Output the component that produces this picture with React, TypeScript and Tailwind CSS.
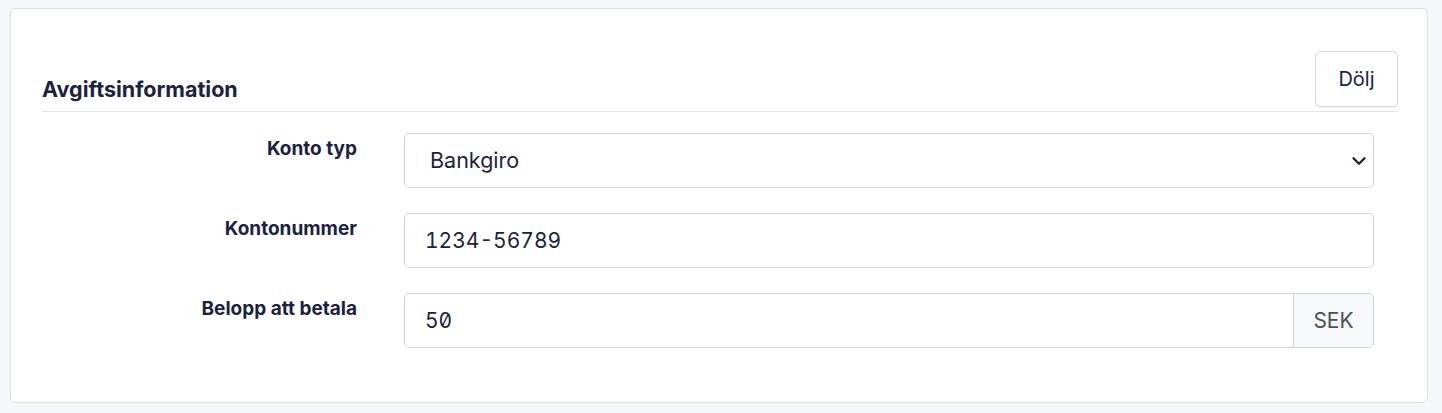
import { ChevronDown } from 'lucide-react';

function Row({ label, children }: { label: string; children: React.ReactNode }) {
  return (
    <div className="flex items-start">
      <label className="w-[315px] shrink-0 pt-[1px] text-right text-[19px] font-bold leading-[30px] text-[#1a2340]">
        {label}
      </label>
      <div className="ml-[47px] flex-1">{children}</div>
    </div>
  );
}

export default function App() {
  return (
    <div className="min-h-screen bg-[#f6f7f9] pl-[10px] pr-[14px] pt-[8px] pb-[9px] font-['Inter',sans-serif] text-[#1a2340]">
      <div className="rounded-[6px] border border-[#dcdfe3] bg-white pl-[31px] pr-[29px] pt-[42px] pb-[54px]">
        {/* header */}
        <div className="flex items-end justify-between border-b border-[#e3e5e8] pb-[4px]">
          <h2 className="pb-[4px] text-[21.5px] font-bold leading-[28px]">Avgiftsinformation</h2>
          <button className="h-[56px] w-[83px] rounded-[5px] border border-[#d5d8dc] bg-white text-[20px] leading-none shadow-[0_1px_2px_rgba(0,0,0,0.06)]">
            Dölj
          </button>
        </div>

        <div className="mt-[21px] flex flex-col gap-[25px] pr-[24px]">
          <Row label="Konto typ">
            <div className="flex h-[55px] items-center justify-between rounded-[5px] border border-[#cfd3d8] pl-[25px] pr-[3px]">
              <span className="text-[21.5px]">Bankgiro</span>
              <ChevronDown size={22} strokeWidth={2.6} className="text-[#1a2340]" />
            </div>
          </Row>
          <Row label="Kontonummer">
            <div className="flex h-[55px] items-center rounded-[5px] border border-[#cfd3d8] pl-[20px]">
              <span className="text-[21px] tabular-nums slashed-zero">1234-56789</span>
            </div>
          </Row>
          <Row label="Belopp att betala">
            <div className="flex h-[55px] rounded-[5px] border border-[#cfd3d8]">
              <div className="flex flex-1 items-center pl-[20px]">
                <span className="text-[21px] tabular-nums slashed-zero">50</span>
              </div>
              <div className="flex w-[80px] items-center justify-center rounded-r-[5px] border-l border-[#cfd3d8] bg-[#f7f8f9] text-[21px] text-[#4b5158]">
                SEK
              </div>
            </div>
          </Row>
        </div>
      </div>
    </div>
  );
}
